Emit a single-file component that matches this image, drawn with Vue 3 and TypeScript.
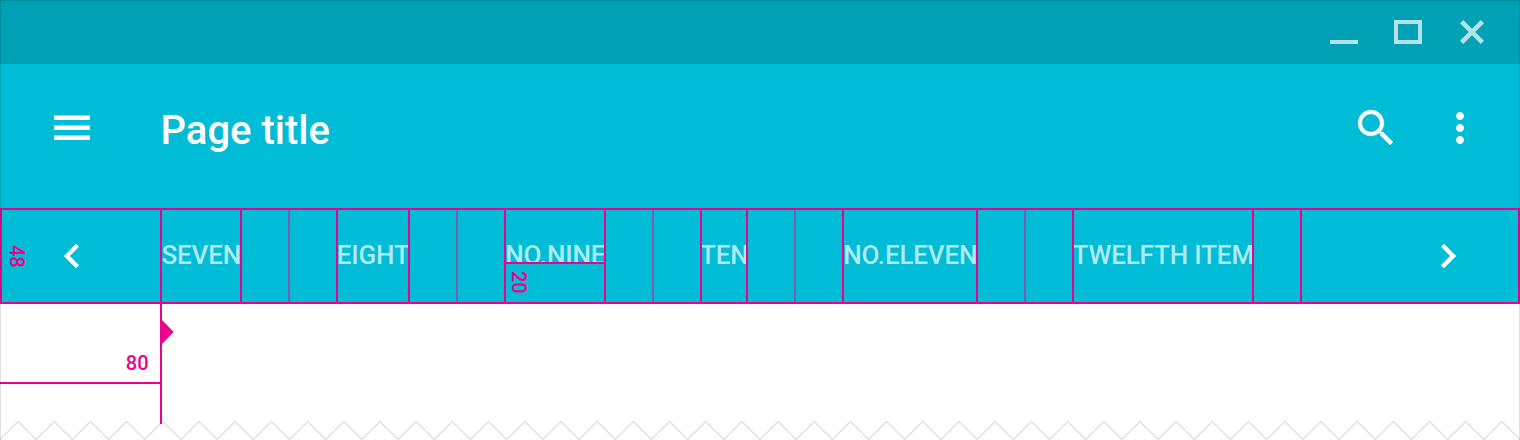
<script setup lang="ts">
interface Cell {
  width: number
  label?: string
  note?: string
  faint?: boolean
}

// Each cell is followed by a 2px guide line; `faint` dims that line.
const cells: Cell[] = [
  { width: 78, label: 'SEVEN' },
  { width: 46, faint: true },
  { width: 46 },
  { width: 70, label: 'EIGHT' },
  { width: 46, faint: true },
  { width: 46 },
  { width: 98, label: 'NO.NINE', note: '20' },
  { width: 46, faint: true },
  { width: 46 },
  { width: 44, label: 'TEN' },
  { width: 46, faint: true },
  { width: 46 },
  { width: 132, label: 'NO.ELEVEN' },
  { width: 46, faint: true },
  { width: 46 },
  { width: 178, label: 'TWELFTH ITEM' },
  { width: 46 },
]

const teeth = 42
const period = 1520 / teeth
const tear = Array.from({ length: teeth * 2 + 1 }, (_, i) =>
  `${((i * period) / 2).toFixed(2)},${i % 2 ? 1.5 : 19.5}`,
).join(' ')
</script>

<template>
  <div class="window">
    <header class="titlebar">
      <svg width="28" height="24" viewBox="0 0 28 24"><path d="M0 20h28v4H0z" fill="currentColor" /></svg>
      <svg width="28" height="24" viewBox="0 0 28 24"><path d="M2 2h24v20H2z" fill="none" stroke="currentColor" stroke-width="4" /></svg>
      <svg class="close" width="24" height="24" viewBox="0 0 24 24"><path d="M1.6 1.6 22.4 22.4M22.4 1.6 1.6 22.4" fill="none" stroke="currentColor" stroke-width="4.6" /></svg>
    </header>

    <div class="toolbar">
      <svg class="icon" viewBox="0 0 24 24"><path d="M3 18h18v-2.2H3v2.2zm0-5h18v-2.2H3v2.2zm0-7.2v2.2h18V5.8H3z" /></svg>
      <h1>Page title</h1>
      <svg class="icon" viewBox="0 0 24 24"><path d="M15.5 14h-.79l-.28-.27C15.41 12.59 16 11.11 16 9.5 16 5.91 13.09 3 9.5 3S3 5.91 3 9.5 5.91 16 9.5 16c1.61 0 3.09-.59 4.23-1.57l.27.28v.79l5 4.99L20.49 19l-4.99-5zm-6 0C7.01 14 5 11.99 5 9.5S7.01 5 9.5 5 14 7.01 14 9.5 11.99 14 9.5 14z" stroke="#fff" stroke-width="0.12" /></svg>
      <svg class="icon more" viewBox="0 0 24 24"><path d="M12 8c1.1 0 2-.9 2-2s-.9-2-2-2-2 .9-2 2 .9 2 2 2zm0 2c-1.1 0-2 .9-2 2s.9 2 2 2 2-.9 2-2-.9-2-2-2zm0 6c-1.1 0-2 .9-2 2s.9 2 2 2 2-.9 2-2-.9-2-2-2z" /></svg>
    </div>

    <nav class="tabs">
      <div class="side">
        <span class="dim height">48</span>
        <svg class="icon" viewBox="0 0 24 24"><path d="M15.41 7.41L14 6l-6 6 6 6 1.41-1.41L10.83 12z" stroke="#fff" stroke-width="0.2" /></svg>
      </div>
      <i class="guide"></i>
      <template v-for="(cell, i) in cells" :key="i">
        <div class="cell" :style="{ width: cell.width + 'px' }">
          <span v-if="cell.label" class="label">{{ cell.label }}</span>
          <div v-if="cell.note" class="baseline"><span class="dim">{{ cell.note }}</span></div>
        </div>
        <i class="guide" :class="{ faint: cell.faint }"></i>
      </template>
      <div class="end">
        <svg class="icon" viewBox="0 0 24 24"><path d="M10 6L8.59 7.41 13.17 12l-4.58 4.59L10 18l6-6z" stroke="#fff" stroke-width="0.2" /></svg>
      </div>
    </nav>

    <main class="content">
      <div class="inset"><span class="dim">80</span></div>
      <svg class="marker" width="14" height="120" viewBox="0 0 14 120"><path d="M0 0h2v120H0zM2 16l11.7 12L2 40z" /></svg>
    </main>

    <svg class="tear" width="1520" height="20" viewBox="0 0 1520 20">
      <polyline :points="tear" fill="none" stroke="#e0e0e0" stroke-width="1.4" />
    </svg>
    <div class="frame"></div>
  </div>
</template>

<style>
body {
  margin: 0;
  background: #fff;
}
</style>

<style scoped>
.window {
  position: relative;
  width: 1520px;
  height: 440px;
  overflow: hidden;
  background: #fff;
  font-family: Roboto, sans-serif;
  font-weight: 500;
}
svg {
  display: block;
  flex: none;
}
.titlebar {
  height: 64px;
  box-sizing: border-box;
  padding-right: 36px;
  display: flex;
  align-items: center;
  justify-content: flex-end;
  gap: 36px;
  background: #00a0b5;
  color: rgba(255, 255, 255, 0.7);
}
.close {
  margin-left: 2px;
}
.toolbar {
  height: 144px;
  box-sizing: border-box;
  padding: 40px 36px 0 48px;
  display: flex;
  align-items: flex-start;
  background: #00bcd6;
}
.icon {
  width: 48px;
  height: 48px;
  fill: #fff;
}
.more {
  margin-left: 36px;
}
h1 {
  flex: 1;
  margin: 3px 0 0 64.5px;
  font-size: 40px;
  line-height: 48px;
  font-weight: 500;
  color: #fff;
}
.tabs {
  height: 96px;
  box-sizing: border-box;
  border: 2px solid #ec008c;
  display: flex;
  background: #00bcd6;
}
.side {
  flex: none;
  width: 158px;
  display: flex;
  align-items: center;
}
.side .icon {
  margin-left: 19px;
}
.guide {
  flex: none;
  width: 2px;
  z-index: 1;
  background: #ec008c;
}
.guide.faint {
  background: #7a5eb2;
}
.cell {
  position: relative;
  flex: none;
  display: flex;
  align-items: center;
  justify-content: center;
}
.label {
  margin-bottom: 2px;
  padding-left: 0.5px;
  font-size: 26px;
  line-height: 30px;
  font-weight: 500;
  letter-spacing: -0.15px;
  white-space: nowrap;
  color: rgba(255, 255, 255, 0.7);
}
.dim {
  font-size: 20px;
  line-height: 24px;
  color: #ec008c;
}
.height,
.baseline .dim {
  writing-mode: vertical-rl;
}
.height {
  margin-left: 3px;
  width: 24px;
}
.baseline {
  position: absolute;
  left: 0;
  right: 0;
  top: 52px;
  padding: 7px 0 0 1px;
  border-top: 2px solid #ec008c;
  display: flex;
}
.end {
  flex: 1;
  display: flex;
  align-items: center;
  justify-content: flex-end;
  padding-right: 46px;
}
.content {
  height: 116px;
  display: flex;
  align-items: flex-start;
}
.inset {
  width: 160px;
  height: 80px;
  box-sizing: border-box;
  padding: 0 11.5px 7px 0;
  border-bottom: 2px solid #ec008c;
  display: flex;
  align-items: flex-end;
  justify-content: flex-end;
}
.marker {
  z-index: 1;
  fill: #ec008c;
}
.frame {
  position: absolute;
  inset: 0;
  border: 1px solid rgba(0, 0, 0, 0.12);
  border-bottom: 0;
  pointer-events: none;
}
</style>
